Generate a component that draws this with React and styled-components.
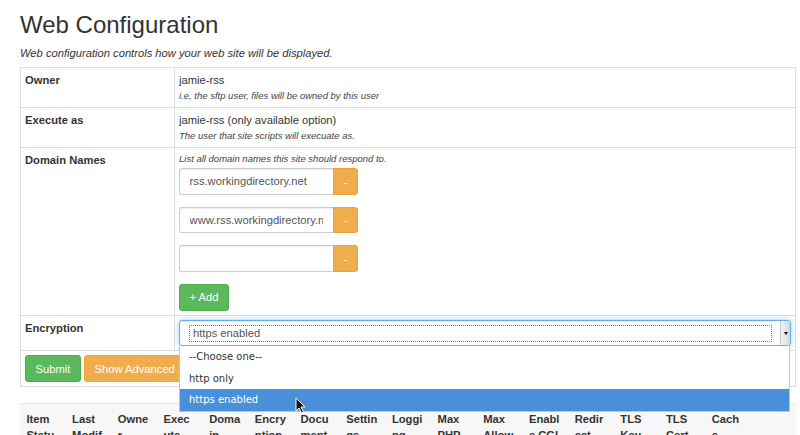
import React from "react";
import styled, { createGlobalStyle } from "styled-components";

const GlobalStyle = createGlobalStyle`
  body {
    margin: 0;
    background: #fff;
    color: #333;
    font-family: "Liberation Sans", Arial, sans-serif;
    font-size: 11.2px;
    line-height: 16px;
  }
`;

const Page = styled.div`
  width: 776px;
  padding: 12px 0 0 20px;
`;

const Title = styled.h1`
  margin: 0 0 7px;
  font-size: 24px;
  font-weight: normal;
  line-height: 1.1;
  color: #333;
`;

const Lead = styled.p`
  margin: 0 0 6px;
  font-style: italic;
  line-height: 16px;
`;

const ConfigTable = styled.table`
  width: 776px;
  border-collapse: collapse;
  table-layout: fixed;
  border: 1px solid #ddd;
`;

const LabelCell = styled.th`
  padding: 4px;
  border: 1px solid #ddd;
  text-align: left;
  vertical-align: top;
  font-weight: bold;
`;

const ValueCell = styled.td`
  padding: 4px;
  border: 1px solid #ddd;
  vertical-align: top;
`;

const Hint = styled.small`
  display: block;
  font-size: 9.5px;
  font-style: italic;
  line-height: ${(p) => (p.$top ? "14px" : "15px")};
  margin-bottom: ${(p) => (p.$top ? "2px" : "0")};
  color: #444;
`;

const InputGroup = styled.div`
  display: flex;
  width: 179px;
  height: 26.5px;
  margin-bottom: 12px;
`;

const TextInput = styled.div`
  box-sizing: border-box;
  width: 154px;
  height: 100%;
  padding: 0 9.6px;
  border: 1px solid #ccc;
  border-right: 0;
  border-radius: 3px 0 0 3px;
  box-shadow: inset 0 1px 1px rgba(0, 0, 0, 0.075);
  color: #555;
  line-height: 24.5px;
`;

const InputValue = styled.div`
  overflow: hidden;
  white-space: nowrap;
`;

const Button = styled.button`
  box-sizing: border-box;
  height: 27px;
  padding: 0 9.6px;
  border: 1px solid ${(p) => (p.$variant === "warning" ? "#eea236" : "#4cae4c")};
  border-radius: 3px;
  background: ${(p) => (p.$variant === "warning" ? "#f0ad4e" : "#5cb85c")};
  color: #fff;
  font-family: "Liberation Sans", Arial, sans-serif;
  font-size: 11.2px;
  line-height: 16px;
  white-space: nowrap;
  cursor: pointer;
`;

const AddonButton = styled(Button)`
  width: 25px;
  height: 100%;
  padding: 0;
  border-radius: 0 3px 3px 0;
`;

const ButtonRow = styled.div`
  display: flex;
  gap: 3px;
`;

const SelectWrap = styled.div`
  position: relative;
  width: 612px;
`;

const SelectBox = styled.div`
  box-sizing: border-box;
  display: flex;
  align-items: center;
  height: 26.4px;
  padding-left: 9px;
  border: 1px solid #66afe9;
  border-radius: 3px;
  box-shadow: inset 0 1px 1px rgba(0, 0, 0, 0.075), 0 0 6px rgba(102, 175, 233, 0.6);
  background: #fff;
`;

const FocusRing = styled.div`
  box-sizing: border-box;
  width: 583px;
  height: 17px;
  padding-left: 3px;
  border: 1px dotted #777;
  line-height: 15px;
  color: #555;
`;

const Arrow = styled.div`
  margin-left: auto;
  width: 9px;
  height: 24.4px;
  display: flex;
  align-items: center;
  justify-content: center;
  border-radius: 0 2px 2px 0;
  background: linear-gradient(to right, #f4f4f4, #d6d6d6);
  border-left: 1px solid #c8c8c8;
  &::after {
    content: "";
    border-left: 2px solid transparent;
    border-right: 2px solid transparent;
    border-top: 3px solid #111;
  }
`;

const Dropdown = styled.ul`
  position: absolute;
  top: 100%;
  left: 0;
  z-index: 5;
  box-sizing: border-box;
  width: 611px;
  margin: 0;
  padding: 0;
  list-style: none;
  background: #fff;
  border: 1px solid #c4c4c4;
  border-top: 0;
  font-family: "DejaVu Sans", "Liberation Sans", sans-serif;
  font-size: 10px;
`;

const Option = styled.li`
  height: 21.5px;
  padding-left: 9px;
  line-height: 21.5px;
  color: ${(p) => (p.$active ? "#fff" : "#333")};
  background: ${(p) => (p.$active ? "#4a8fd9" : "transparent")};
`;

const Pointer = styled.svg`
  position: absolute;
  left: 115px;
  top: 51px;
  z-index: 6;
`;

const ListTable = styled.table`
  width: 776px;
  margin-top: 16px;
  border-collapse: collapse;
  table-layout: fixed;
`;

const HeadCell = styled.th`
  padding: 6.4px ${(p) => (p.$last ? "52px" : "7.6px")} 6.4px 6.4px;
  background: #f7f7f7;
  border-top: 1px solid #e4e4e4;
  text-align: left;
  vertical-align: top;
  font-weight: bold;
  line-height: 16px;
  overflow-wrap: anywhere;
`;

const domains = ["rss.workingdirectory.net", "www.rss.workingdirectory.net", ""];

const columns = [
  "Item Status",
  "Last Modified",
  "Owner",
  "Execute as",
  "Domain",
  "Encryption",
  "Document Root",
  "Settings",
  "Logging",
  "Max PHP Execution Time",
  "Max Allowed Memory",
  "Enable CGI",
  "Redirect",
  "TLS Key",
  "TLS Cert",
  "Cache",
];

export default function App() {
  return (
    <>
      <GlobalStyle />
      <Page>
        <Title>Web Configuration</Title>
        <Lead>Web configuration controls how your web site will be displayed.</Lead>

        <ConfigTable>
          <colgroup>
            <col style={{ width: 154 }} />
            <col />
          </colgroup>
          <tbody>
            <tr>
              <LabelCell>Owner</LabelCell>
              <ValueCell>
                jamie-rss
                <Hint>i.e, the sftp user, files will be owned by this user</Hint>
              </ValueCell>
            </tr>
            <tr>
              <LabelCell>Execute as</LabelCell>
              <ValueCell>
                jamie-rss (only available option)
                <Hint>The user that site scripts will execuate as.</Hint>
              </ValueCell>
            </tr>
            <tr>
              <LabelCell>Domain Names</LabelCell>
              <ValueCell>
                <Hint $top>List all domain names this site should respond to.</Hint>
                {domains.map((d, i) => (
                  <InputGroup key={i}>
                    <TextInput>
                      <InputValue>{d}</InputValue>
                    </TextInput>
                    <AddonButton $variant="warning">-</AddonButton>
                  </InputGroup>
                ))}
                <Button>+ Add</Button>
              </ValueCell>
            </tr>
            <tr>
              <LabelCell>Encryption</LabelCell>
              <ValueCell>
                <SelectWrap>
                  <SelectBox>
                    <FocusRing>https enabled</FocusRing>
                    <Arrow />
                  </SelectBox>
                  <Dropdown>
                    <Option>--Choose one--</Option>
                    <Option>http only</Option>
                    <Option $active>https enabled</Option>
                    <Pointer width="11" height="17" viewBox="0 0 11 17">
                      <path
                        d="M1 1 L1 14 L4 11 L6.5 16 L8.5 15 L6 10 L10 10 Z"
                        fill="#111"
                        stroke="#fff"
                        strokeWidth="1"
                        strokeLinejoin="round"
                      />
                    </Pointer>
                  </Dropdown>
                </SelectWrap>
              </ValueCell>
            </tr>
            <tr>
              <ValueCell colSpan={2}>
                <ButtonRow>
                  <Button>Submit</Button>
                  <Button $variant="warning">Show Advanced Settings</Button>
                </ButtonRow>
              </ValueCell>
            </tr>
          </tbody>
        </ConfigTable>

        <ListTable>
          <colgroup>
            {columns.map((c, i) => (
              <col key={c} style={i < columns.length - 1 ? { width: 45.7 } : undefined} />
            ))}
          </colgroup>
          <thead>
            <tr>
              {columns.map((c, i) => (
                <HeadCell key={c} $last={i === columns.length - 1}>
                  {c}
                </HeadCell>
              ))}
            </tr>
          </thead>
        </ListTable>
      </Page>
    </>
  );
}
